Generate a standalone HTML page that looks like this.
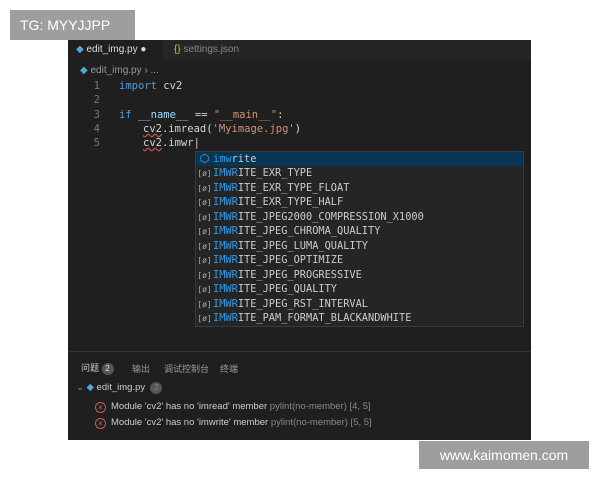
<!DOCTYPE html><html><head><style>
body{margin:0;width:600px;height:480px;background:#fff;position:relative;overflow:hidden;font-family:"Liberation Sans",sans-serif}
.p{position:absolute;left:68px;top:40px;width:463px;height:400px;background:#1f1f20}
.tabs{position:absolute;left:0;top:0;width:463px;height:20px;background:#252526}
.tab{position:absolute;top:0;height:20px;line-height:20px;font-size:10px;color:#ddd}
.m{font-family:"DejaVu Sans Mono",monospace;font-size:10.5px;position:absolute;white-space:pre;color:#d4d4d4}
.ln{color:#777;width:20px;text-align:right}
.sg{position:absolute;left:127px;top:111px;width:327px;height:174px;background:#252526;border:1px solid #3a3a3a}
.r{position:absolute;left:0;width:327px;height:14px;line-height:14px;font-family:"DejaVu Sans Mono",monospace;font-size:10.3px;color:#ccc;white-space:pre}
.r b{color:#2f9ae8;font-weight:normal}
.r i{font-style:normal;color:#aaa;font-size:8px;display:inline-block;width:17px;text-align:center}
.cn{font-size:9px;color:#999;position:absolute}
.bd{display:inline-block;width:12px;height:12px;border-radius:6px;background:#555;color:#ddd;font-size:8px;text-align:center;line-height:12px}
.er{position:absolute;font-size:9.5px;color:#ccc;white-space:nowrap}
.er span{color:#888}
.x{display:inline-block;width:9px;height:9px;border:1px solid #e05050;border-radius:50%;color:#e05050;font-size:8px;line-height:9px;text-align:center;margin-right:5px;vertical-align:-1px}
</style></head><body>
<div style="position:absolute;left:10px;top:10px;width:125px;height:30px;background:#9e9e9e;color:#fff;font-size:14px;line-height:30px;padding-left:10px;box-sizing:border-box">TG: MYYJJPP</div>
<div class="p">
<div class="tabs">
<div class="tab" style="left:0;width:95px;background:#1f1f20;padding-left:8px;box-sizing:border-box"><span style="color:#4fa9d6">◆</span> edit_img.py ●</div>
<div class="tab" style="left:106px;color:#888"><span style="color:#d6b84f">{}</span> settings.json</div>
</div>
<div class="tab" style="top:21px;left:12px;color:#999;font-size:10px"><span style="color:#4fa9d6">◆</span> edit_img.py › ...</div>
<div class="m ln" style="left:12px;top:40px">1</div><div class="m" style="left:51px;top:40px"><span style="color:#569cd6">import</span> cv2</div>
<div class="m ln" style="left:12px;top:54px">2</div>
<div class="m ln" style="left:12px;top:69px">3</div><div class="m" style="left:51px;top:69px"><span style="color:#569cd6">if</span> <span style="color:#9cdcfe">__name__</span> == <span style="color:#ce9178">"__main__"</span>:</div>
<div class="m ln" style="left:12px;top:83px">4</div><div class="m" style="left:75px;top:83px"><u style="text-decoration-color:#e05050;text-decoration-style:wavy">cv2</u>.imread(<span style="color:#ce9178">'Myimage.jpg'</span>)</div>
<div class="m ln" style="left:12px;top:97px">5</div><div class="m" style="left:75px;top:97px"><u style="text-decoration-color:#e05050;text-decoration-style:wavy">cv2</u>.imwr|</div>
<div class="sg">
<div class="r" style="top:0;background:#073655"><i style="color:#6aa9e0;font-size:11px">⬡</i><b>imw</b>rite</div>
<div class="r" style="top:14px"><i>[ø]</i><b>IMWR</b>ITE_EXR_TYPE</div>
<div class="r" style="top:28.5px"><i>[ø]</i><b>IMWR</b>ITE_EXR_TYPE_FLOAT</div>
<div class="r" style="top:43px"><i>[ø]</i><b>IMWR</b>ITE_EXR_TYPE_HALF</div>
<div class="r" style="top:57.5px"><i>[ø]</i><b>IMWR</b>ITE_JPEG2000_COMPRESSION_X1000</div>
<div class="r" style="top:72px"><i>[ø]</i><b>IMWR</b>ITE_JPEG_CHROMA_QUALITY</div>
<div class="r" style="top:86.5px"><i>[ø]</i><b>IMWR</b>ITE_JPEG_LUMA_QUALITY</div>
<div class="r" style="top:101px"><i>[ø]</i><b>IMWR</b>ITE_JPEG_OPTIMIZE</div>
<div class="r" style="top:115.5px"><i>[ø]</i><b>IMWR</b>ITE_JPEG_PROGRESSIVE</div>
<div class="r" style="top:130px"><i>[ø]</i><b>IMWR</b>ITE_JPEG_QUALITY</div>
<div class="r" style="top:144.5px"><i>[ø]</i><b>IMWR</b>ITE_JPEG_RST_INTERVAL</div>
<div class="r" style="top:159px"><i>[ø]</i><b>IMWR</b>ITE_PAM_FORMAT_BLACKANDWHITE</div>
</div>
<div style="position:absolute;left:0;top:311px;width:463px;height:1px;background:#333"></div>
<div class="cn" style="left:13px;top:321px;color:#ccc;font-family:'Liberation Sans','Noto Sans CJK SC',sans-serif">问题 <span class="bd">2</span></div>
<div class="cn" style="left:64px;top:322px;font-family:'Liberation Sans','Noto Sans CJK SC',sans-serif">输出</div>
<div class="cn" style="left:96px;top:322px;font-family:'Liberation Sans','Noto Sans CJK SC',sans-serif">调试控制台</div>
<div class="cn" style="left:152px;top:322px;font-family:'Liberation Sans','Noto Sans CJK SC',sans-serif">终端</div>
<div class="er" style="left:8px;top:342px"><span>⌄</span> <span style="color:#4fa9d6">◆</span> edit_img.py &nbsp;<span class="bd">2</span></div>
<div class="er" style="left:27px;top:361px"><span class="x">×</span>Module 'cv2' has no 'imread' member <span>pylint(no-member) [4, 5]</span></div>
<div class="er" style="left:27px;top:377px"><span class="x">×</span>Module 'cv2' has no 'imwrite' member <span>pylint(no-member) [5, 5]</span></div>
</div>
<div style="position:absolute;left:419px;top:441px;width:170px;height:28px;background:#9e9e9e;color:#fff;font-size:14px;line-height:28px;text-align:center">www.kaimomen.com</div>
</body></html>
